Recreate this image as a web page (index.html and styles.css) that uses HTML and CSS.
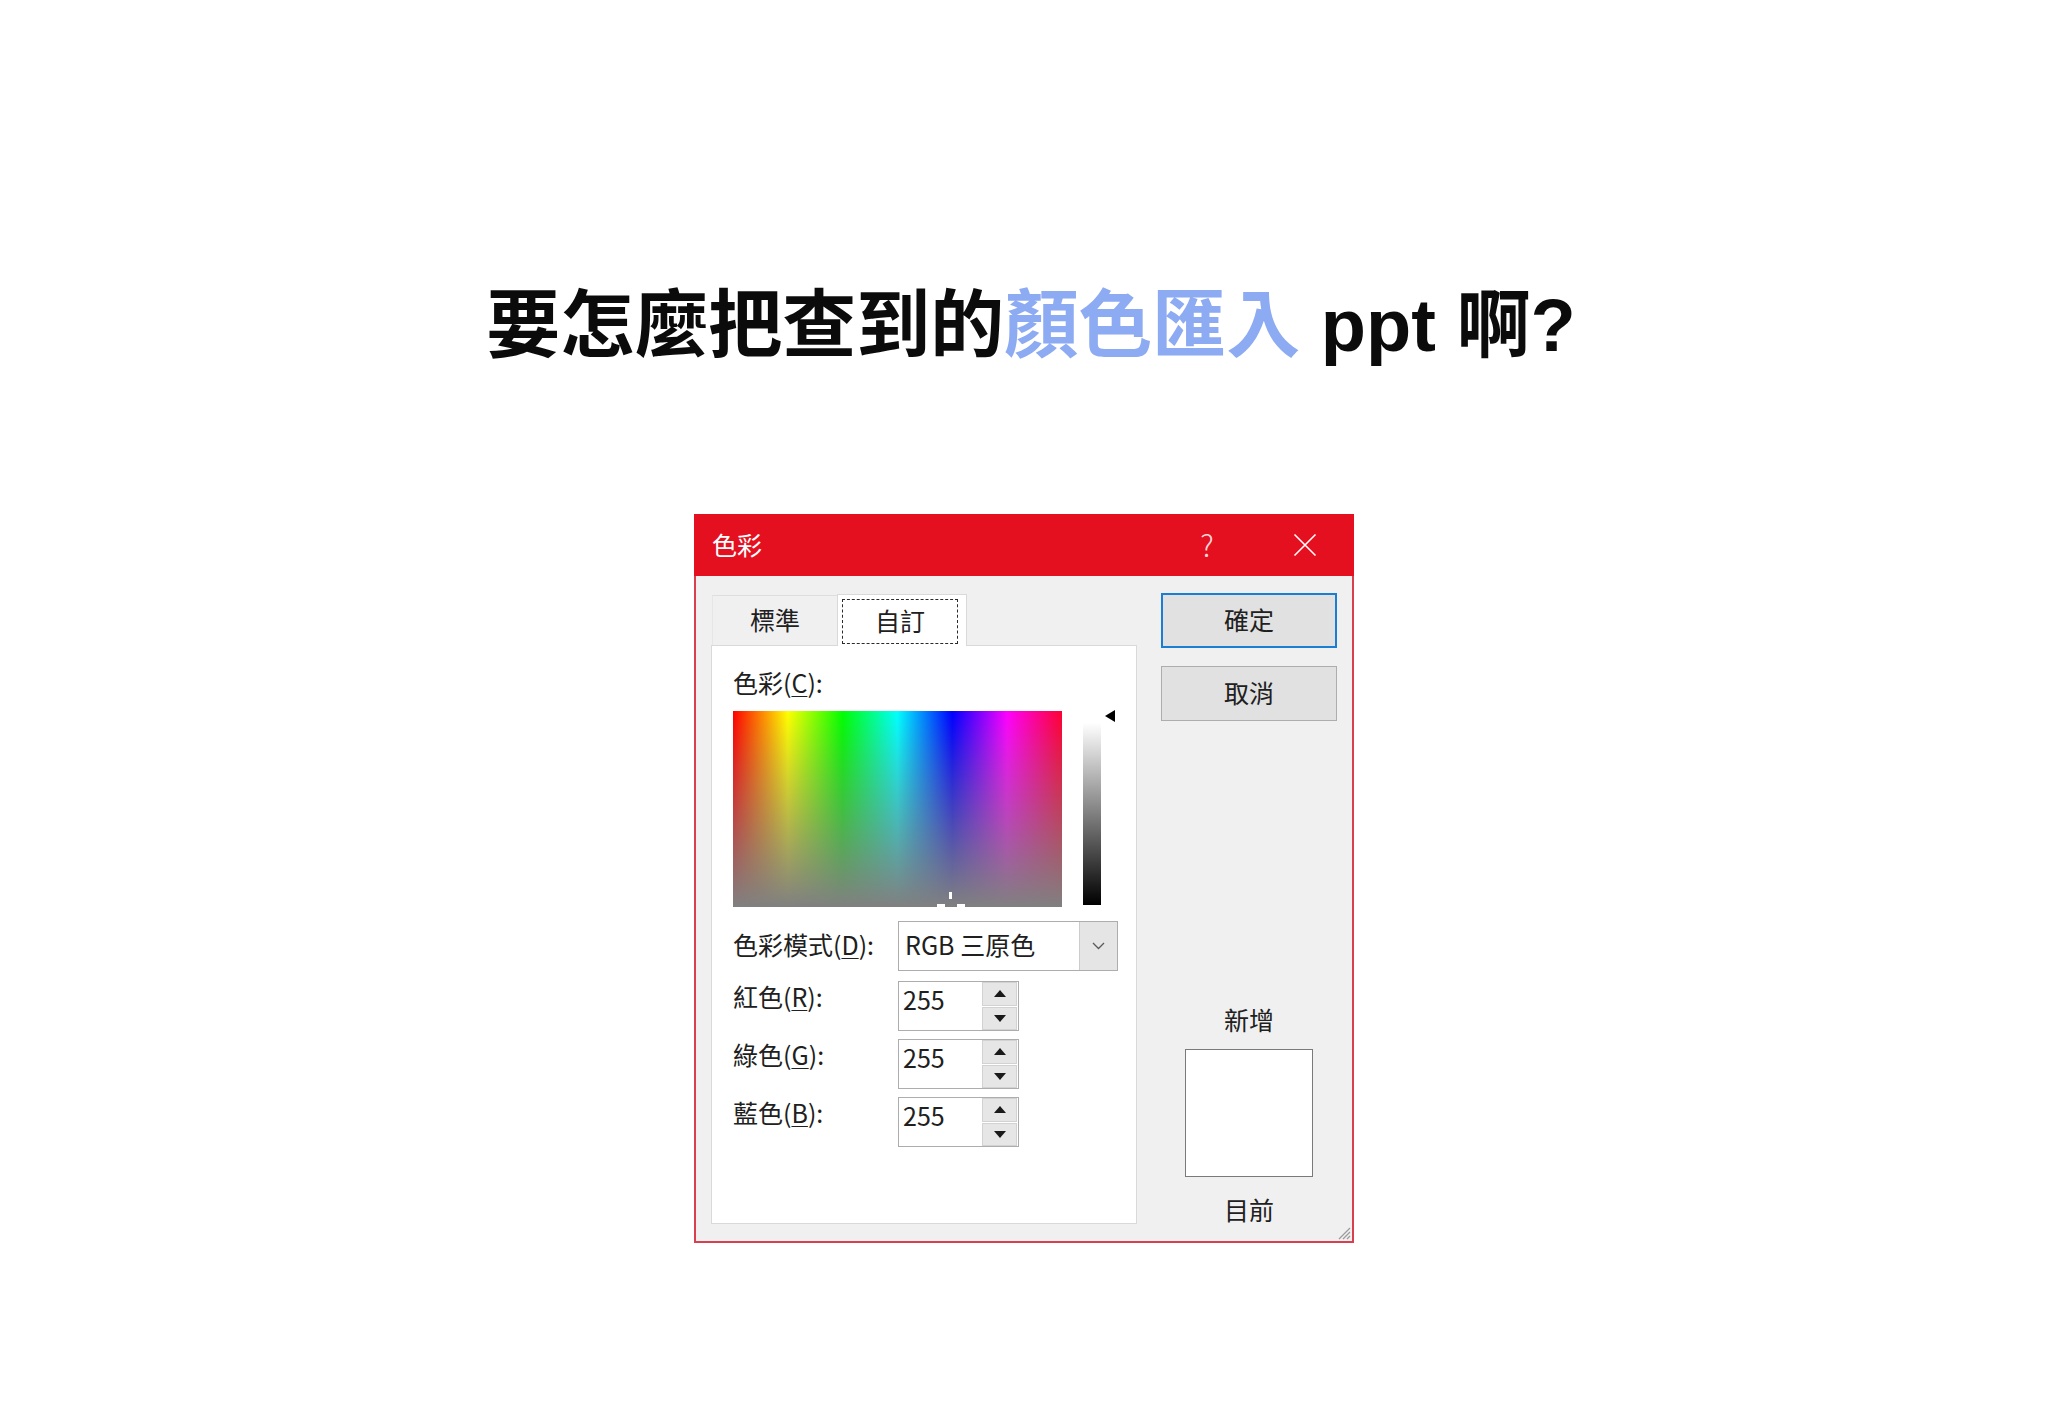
FILE: index.html
```html
<!DOCTYPE html>
<html lang="zh-Hant">
<head>
<meta charset="utf-8">
<title>要怎麼把查到的顏色匯入 ppt 啊?</title>
<link rel="stylesheet" href="styles.css">
</head>
<body>
<main class="page">
  <h1 class="headline">要怎麼把查到的<span class="accent">顏色匯入</span> ppt 啊?</h1>

  <section class="dialog">
    <header class="titlebar">
      <span class="titlebar-text">色彩</span>
      <span class="titlebar-help">?</span>
      <span class="titlebar-close">
        <svg width="24" height="24" viewBox="0 0 24 24"><path d="M1.5 1.5 L22.5 22.5 M22.5 1.5 L1.5 22.5" stroke="#fff" stroke-width="1.6" fill="none"/></svg>
      </span>
    </header>

    <div class="dialog-body">
      <div class="main-col">
        <div class="tabs">
          <div class="tab">標準</div>
          <div class="tab tab-active"><span class="tab-focus">自訂</span></div>
        </div>
        <div class="panel">
          <div class="label">色彩(<u>C</u>):</div>
          <div class="picker-row">
            <div class="spectrum">
              <span class="cross cross-v"></span>
              <span class="cross cross-l"></span>
              <span class="cross cross-r"></span>
            </div>
            <div class="lum"></div>
            <div class="lum-arrow"></div>
          </div>

          <div class="mode-row">
            <div class="label field-label mode-label">色彩模式(<u>D</u>):</div>
            <div class="select">
              <span class="select-value">RGB 三原色</span>
              <span class="select-btn">
                <svg width="13" height="8" viewBox="0 0 13 8"><path d="M1 1 L6.5 6.5 L12 1" stroke="#5a5a5a" stroke-width="1.3" fill="none"/></svg>
              </span>
            </div>
          </div>

          <div class="spin-row spin-first">
            <div class="label field-label spin-label">紅色(<u>R</u>):</div>
            <div class="spin">
              <span class="spin-value">255</span>
              <span class="spin-btns"><span class="spin-btn"><i class="tri-up"></i></span><span class="spin-btn"><i class="tri-down"></i></span></span>
            </div>
          </div>
          <div class="spin-row">
            <div class="label field-label spin-label">綠色(<u>G</u>):</div>
            <div class="spin">
              <span class="spin-value">255</span>
              <span class="spin-btns"><span class="spin-btn"><i class="tri-up"></i></span><span class="spin-btn"><i class="tri-down"></i></span></span>
            </div>
          </div>
          <div class="spin-row">
            <div class="label field-label spin-label">藍色(<u>B</u>):</div>
            <div class="spin">
              <span class="spin-value">255</span>
              <span class="spin-btns"><span class="spin-btn"><i class="tri-up"></i></span><span class="spin-btn"><i class="tri-down"></i></span></span>
            </div>
          </div>
        </div>
      </div>

      <div class="side">
        <div class="btn btn-default">確定</div>
        <div class="btn btn-cancel">取消</div>
        <div class="preview-group">
          <div class="label">新增</div>
          <div class="preview"></div>
          <div class="label preview-bottom">目前</div>
        </div>
      </div>

      <svg class="grip" width="15" height="15" viewBox="0 0 15 15"><path d="M14 3 L3 14 M14 7 L7 14 M14 11 L11 14" stroke="#9a9a9a" stroke-width="1.2" fill="none"/></svg>
    </div>
  </section>
</main>
</body>
</html>
```

FILE: styles.css
```css
html, body {
  margin: 0;
  padding: 0;
  background: #ffffff;
}

.page {
  display: flex;
  flex-direction: column;
  align-items: center;
  padding-top: 289px;
}

.headline {
  margin: 0;
  padding-left: 14px;
  font-family: "Liberation Sans", "Noto Sans CJK TC", sans-serif;
  font-weight: 700;
  font-size: 74px;
  line-height: 74px;
  color: #0b0b0b;
  white-space: nowrap;
}

.accent {
  color: #8dabf2;
}

/* Dialog */
.dialog {
  margin-top: 151px;
  width: 660px;
  display: flex;
  flex-direction: column;
  font-family: "Noto Sans CJK TC", "Noto Sans", sans-serif;
  font-size: 25px;
  color: #202020;
}

.titlebar {
  height: 62px;
  background: #e5101f;
  display: flex;
  align-items: center;
  padding-left: 18px;
  color: #ffffff;
}

.titlebar-text {
  flex: 1;
  line-height: 30px;
  padding-bottom: 3px;
  font-size: 25px;
}

.titlebar-help {
  width: 24px;
  text-align: center;
  font-size: 30px;
  font-weight: 300;
  line-height: 30px;
  padding-bottom: 3px;
  color: rgba(255, 255, 255, 0.85);
  margin-right: 74px;
}

.titlebar-close {
  width: 24px;
  height: 24px;
  margin-right: 37px;
  display: flex;
}

.dialog-body {
  position: relative;
  display: flex;
  gap: 24px;
  padding: 18px 15px 17px 15px;
  background: #f0f0f0;
  border: 2px solid #d9404f;
  border-top: 0;
}

.main-col {
  width: 426px;
  display: flex;
  flex-direction: column;
}

.tabs {
  height: 51px;
  display: flex;
  align-items: flex-end;
  padding-left: 1px;
  position: relative;
  z-index: 1;
}

.tab {
  box-sizing: border-box;
  width: 125px;
  height: 50px;
  padding-bottom: 3px;
  border-top: 1px solid #dedede;
  border-left: 1px solid #e6e6e6;
  background: #f0f0f0;
  display: flex;
  align-items: center;
  justify-content: center;
  line-height: 30px;
}

.tab-active {
  width: 130px;
  height: 52px;
  margin-bottom: -1px;
  background: #ffffff;
  border: 1px solid #d9d9d9;
  border-bottom: 0;
  padding: 4px 8px 2px 4px;
  align-items: stretch;
}

.tab-focus {
  flex: 1;
  border: 1px dashed #2a2a2a;
  padding-bottom: 3px;
  display: flex;
  align-items: center;
  justify-content: center;
}

.panel {
  box-sizing: border-box;
  height: 579px;
  background: #ffffff;
  border: 1px solid #d9d9d9;
  padding: 21px 0 0 21px;
}

.label {
  line-height: 30px;
  white-space: nowrap;
}

.label u {
  text-decoration-thickness: 1px;
  text-underline-offset: 3px;
}

.picker-row {
  display: flex;
  align-items: flex-start;
  margin-top: 14px;
}

.spectrum {
  position: relative;
  width: 329px;
  height: 196px;
  background:
    linear-gradient(to bottom, rgba(128, 128, 128, 0), #808080),
    linear-gradient(to right, #ff0000, #ffff00, #00ff00, #00ffff, #0000ff, #ff00ff, #ff0033);
}

.cross {
  position: absolute;
  background: #ffffff;
}

.cross-v {
  left: 216px;
  top: 181px;
  width: 3px;
  height: 7px;
}

.cross-l {
  left: 204px;
  top: 193px;
  width: 8px;
  height: 3px;
}

.cross-r {
  left: 224px;
  top: 193px;
  width: 8px;
  height: 3px;
}

.lum {
  width: 18px;
  height: 190px;
  margin: 4px 0 0 21px;
  background: linear-gradient(to bottom, #ffffff 4%, #000000);
}

.lum-arrow {
  width: 0;
  height: 0;
  margin: -1px 0 0 4px;
  border-top: 6px solid transparent;
  border-bottom: 6px solid transparent;
  border-right: 10px solid #000000;
}

.mode-row {
  display: flex;
  align-items: center;
  margin-top: 14px;
  height: 50px;
}

.field-label {
  width: 165px;
  flex: none;
}

.mode-label {
  padding-bottom: 4px;
}

.select {
  box-sizing: border-box;
  width: 220px;
  height: 50px;
  border: 1px solid #adadad;
  background: #ffffff;
  display: flex;
}

.select-value {
  flex: 1;
  padding-left: 6px;
  line-height: 44px;
  white-space: nowrap;
}

.select-btn {
  width: 37px;
  background: #e5e5e5;
  border-left: 1px solid #cccccc;
  display: flex;
  align-items: center;
  justify-content: center;
}

.spin-row {
  display: flex;
  align-items: flex-start;
  height: 50px;
  margin-top: 8px;
}

.spin-first {
  margin-top: 10px;
}

.spin-label {
  line-height: 30px;
}

.spin {
  box-sizing: border-box;
  width: 121px;
  height: 50px;
  border: 1px solid #adadad;
  background: #ffffff;
  display: flex;
}

.spin-value {
  flex: 1;
  padding-left: 4px;
  line-height: 35px;
}

.spin-btns {
  width: 35px;
  display: flex;
  flex-direction: column;
  gap: 1px;
  padding-right: 1px;
}

.spin-btn {
  flex: 1;
  background: #e6e6e6;
  border: 1px solid #d2d2d2;
  display: flex;
  align-items: center;
  justify-content: center;
}

.tri-up {
  width: 0;
  height: 0;
  border-left: 6px solid transparent;
  border-right: 6px solid transparent;
  border-bottom: 7px solid #1a1a1a;
}

.tri-down {
  width: 0;
  height: 0;
  border-left: 6px solid transparent;
  border-right: 6px solid transparent;
  border-top: 7px solid #1a1a1a;
}

.side {
  width: 176px;
  display: flex;
  flex-direction: column;
  align-items: center;
}

.btn {
  box-sizing: border-box;
  width: 176px;
  height: 55px;
  padding-bottom: 3px;
  background: #e1e1e1;
  border: 1px solid #adadad;
  display: flex;
  align-items: center;
  justify-content: center;
  line-height: 30px;
}

.btn-default {
  border: 2px solid #1a7fd4;
  margin-top: -1px;
}

.btn-cancel {
  margin-top: 18px;
}

.preview-group {
  margin-top: auto;
  display: flex;
  flex-direction: column;
  align-items: center;
}

.preview {
  box-sizing: border-box;
  width: 128px;
  height: 128px;
  margin-top: 15px;
  background: #ffffff;
  border: 1px solid #7a7a7a;
}

.preview-bottom {
  margin-top: 17px;
}

.grip {
  position: absolute;
  right: 1px;
  bottom: 1px;
}
```
